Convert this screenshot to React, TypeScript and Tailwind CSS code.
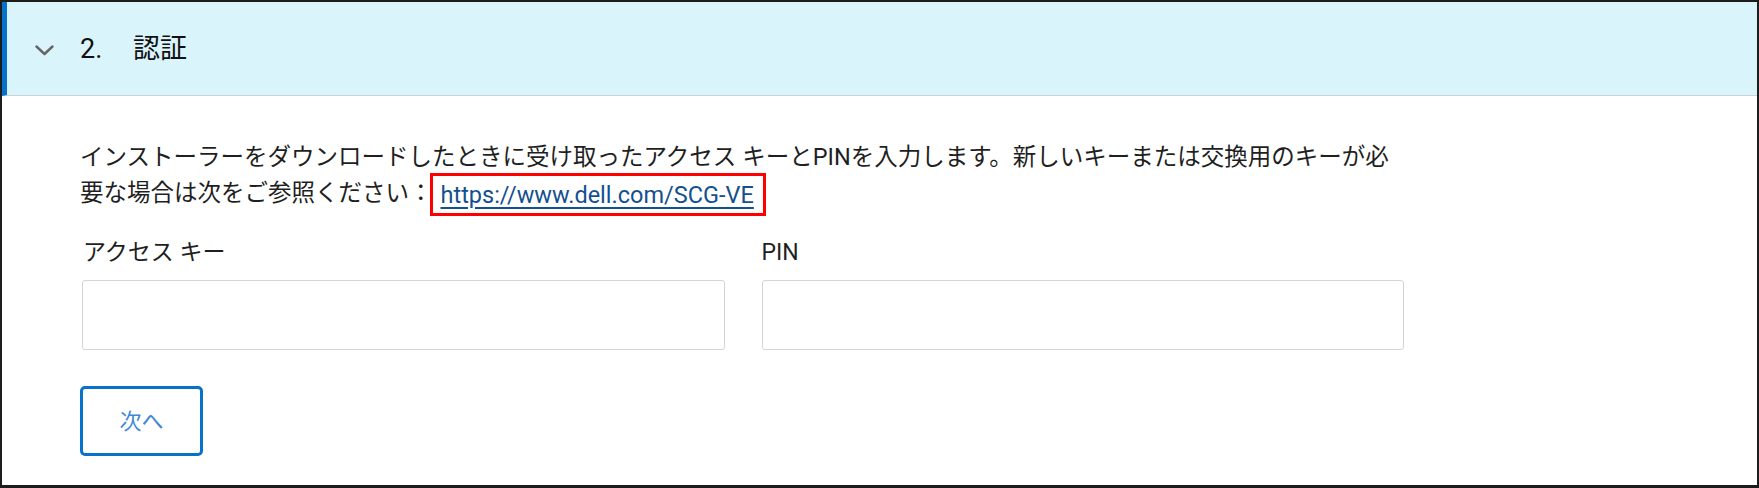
import React from "react";

export default function App() {
  return (
    <div className="w-[1759px] h-[488px] bg-white">
      <div
        className="h-[488px] border-2 border-b-[3px] border-[#1c1c1c] flex flex-col"
        style={{ fontFamily: 'Roboto, "Noto Sans CJK JP", sans-serif' }}
      >
        {/* Header */}
        <div className="h-[94px] shrink-0 bg-[#daf4fc] border-l-[5px] border-[#0672cb] border-b border-b-[#c9d3d8] flex items-center">
          <div className="w-[73px] flex items-center justify-center pl-[1px] pt-[4px]">
            <svg width="19" height="11" viewBox="0 0 19 11" fill="none">
              <polyline points="1.5,1.5 9.5,9 17.5,1.5" stroke="#666666" strokeWidth="2.4" strokeLinecap="round" strokeLinejoin="round" />
            </svg>
          </div>
          <div className="flex items-center text-[27px] leading-[36px] text-[#111]">
            <span className="w-[53px]">2.</span>
            <span>認証</span>
          </div>
        </div>

        {/* Body */}
        <div className="flex-1 pl-[78px] pt-[43px]">
          <div className="w-[1324px]">
            <p className="text-[23.5px] leading-[36px] text-[#1f1f1f]">
              インストーラーをダウンロードしたときに受け取ったアクセス キーとPINを入力します。新しいキーまたは交換用のキーが必要な場合は次をご参照ください：
              <span className="inline-block border-[3px] border-[#ff0000] pl-[8px] pr-[9px] pt-[1px] my-[-4px] ml-[-3px] align-[-2px] leading-[36px]">
                <a href="#" className="text-[#14508f] underline underline-offset-[4px] decoration-[1.5px]">
                  https://www.dell.com/SCG-VE
                </a>
              </span>
            </p>

            <div className="mt-[23px] grid grid-cols-2 gap-x-[37px] pl-[2px]">
              <div className="flex flex-col">
                <label className="text-[23px] leading-[36px] text-[#1f1f1f] pl-[1px]">アクセス キー</label>
                <input type="text" className="mt-[9px] h-[70px] border border-[#d4d4d4] rounded-[3px] bg-white outline-none" />
              </div>
              <div className="flex flex-col">
                <label className="text-[23px] leading-[36px] text-[#1f1f1f]">PIN</label>
                <input type="text" className="mt-[9px] h-[70px] border border-[#d4d4d4] rounded-[3px] bg-white outline-none" />
              </div>
            </div>

            <button className="mt-[36px] w-[123px] h-[70px] border-[3px] border-[#0672cb] rounded-[5px] bg-white text-[22px] text-[#3d88d6] flex items-center justify-center">
              次へ
            </button>
          </div>
        </div>
      </div>
    </div>
  );
}
